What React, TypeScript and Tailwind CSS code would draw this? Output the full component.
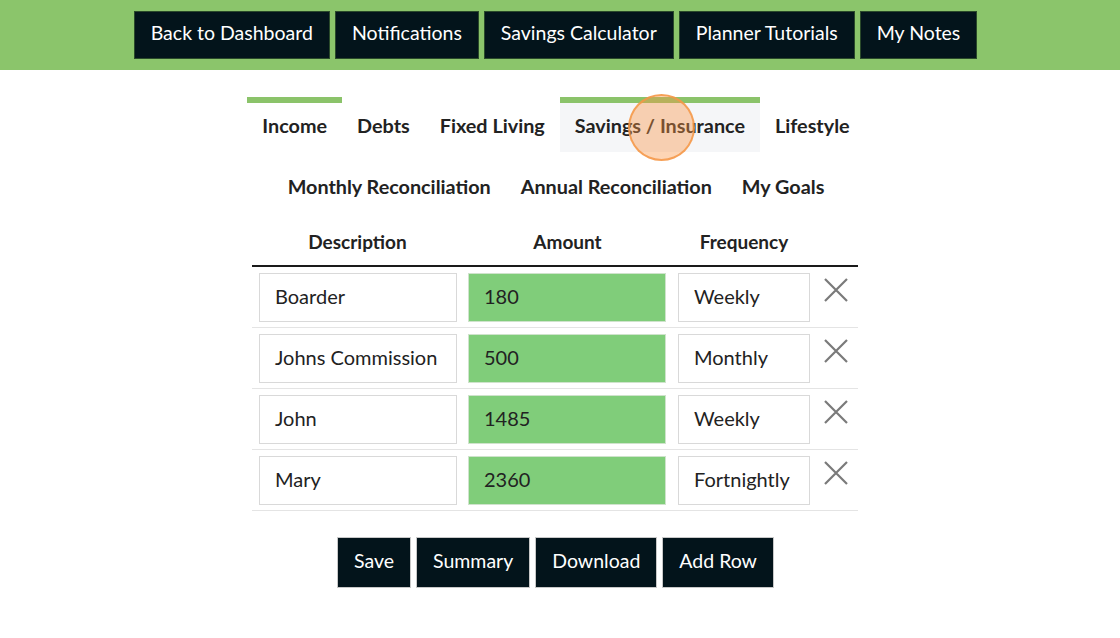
import React from "react";

const navItems = ["Back to Dashboard", "Notifications", "Savings Calculator", "Planner Tutorials", "My Notes"];
const tabsRow1 = ["Income", "Debts", "Fixed Living", "Savings / Insurance", "Lifestyle"];
const tabsRow2 = ["Monthly Reconciliation", "Annual Reconciliation", "My Goals"];
const rows = [
  { d: "Boarder", a: "180", f: "Weekly" },
  { d: "Johns Commission", a: "500", f: "Monthly" },
  { d: "John", a: "1485", f: "Weekly" },
  { d: "Mary", a: "2360", f: "Fortnightly" },
];

function XIcon() {
  return (
    <svg width="26" height="26" viewBox="0 0 26 26" className="block">
      <path d="M2 2 L24 24 M24 2 L2 24" stroke="#7a7a7a" strokeWidth="2.2" fill="none" />
    </svg>
  );
}

function Tab({ label, active, bar }: { label: string; active?: boolean; bar?: boolean }) {
  return (
    <div
      className={
        "border-t-[6px] px-[15px] h-[55px] pb-[4px] flex items-center text-[19.8px] font-bold text-[#222] " +
        (bar ? "border-[#8bc36a] " : "border-transparent ") +
        (active ? "bg-[#f5f6f8]" : "")
      }
    >
      {label}
    </div>
  );
}

export default function App() {
  return (
    <div className="min-h-[638px] w-[1120px] bg-white font-['Lato','Noto_Sans',sans-serif] relative">
      <div className="bg-[#8bc56b] h-[70px] flex items-center justify-center gap-[5px] pr-[9px]">
        {navItems.map((n) => (
          <div
            key={n}
            className="bg-[#03141b] text-white text-[19.5px] h-[48px] px-4 pb-[4px] flex items-center border border-[#2a4a2a]"
          >
            {n}
          </div>
        ))}
      </div>

      <div className="flex flex-col items-center gap-[6px] mt-[27px] pr-[8px]">
        <div className="flex">
          {tabsRow1.map((t, i) => (
            <Tab key={t} label={t} bar={i === 0 || i === 3} active={i === 3} />
          ))}
        </div>
        <div className="flex">
          {tabsRow2.map((t) => (
            <Tab key={t} label={t} />
          ))}
        </div>
      </div>

      <div className="mt-[6px] ml-[252px] w-[606px]">
        <div className="flex h-[48px] pt-[1px] items-center border-b-2 border-[#1a1a1a] text-[19px] font-bold text-[#222]">
          <div className="w-[211px] text-center">Description</div>
          <div className="w-[209px] text-center">Amount</div>
          <div className="w-[144px] text-center">Frequency</div>
          <div className="flex-1" />
        </div>
        {rows.map((r) => (
          <div key={r.d} className="flex items-start border-b border-[#e4e4e4] pt-[6px] pb-[5px] text-[20px] text-[#222]">
            <div className="w-[211px] pl-[7px]">
              <div className="w-[198px] h-[49px] pb-[3px] border border-[#d9d9d9] bg-white flex items-center pl-[15px]">{r.d}</div>
            </div>
            <div className="w-[209px] pl-[5px]">
              <div className="w-[198px] h-[49px] pb-[3px] border border-[#cfe3cc] bg-[#80cd7a] flex items-center pl-[15px]">{r.a}</div>
            </div>
            <div className="w-[144px] pl-[6px]">
              <div className="w-[132px] h-[49px] pb-[3px] border border-[#d9d9d9] bg-white flex items-center pl-[15px]">{r.f}</div>
            </div>
            <div className="flex-1 flex justify-center pt-[4px] pr-[2px]">
              <XIcon />
            </div>
          </div>
        ))}
      </div>

      <div className="flex justify-center gap-[5px] mt-[26px] pr-[9px]">
        {["Save", "Summary", "Download", "Add Row"].map((b) => (
          <div
            key={b}
            className="bg-[#03141b] text-white text-[19.5px] h-[51px] px-4 pb-[3px] flex items-center border border-[#c8c8c8]"
          >
            {b}
          </div>
        ))}
      </div>

      <div className="absolute left-[628px] top-[94px] w-[67px] h-[67px] rounded-full bg-[rgba(250,150,70,0.4)] border-2 border-[rgba(245,150,70,0.85)] pointer-events-none" />
    </div>
  );
}
